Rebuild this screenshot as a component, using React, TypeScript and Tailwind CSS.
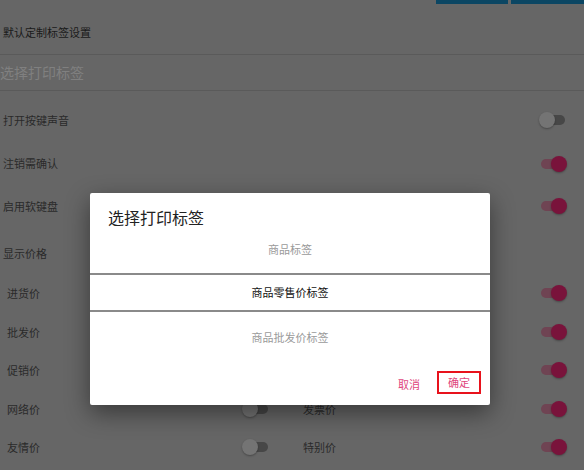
import React from "react";

const font = { fontFamily: '"Noto Sans CJK SC", "Noto Sans", sans-serif' };

function Toggle({ on }: { on: boolean }) {
  return (
    <div className="relative h-[16px] w-[28px]">
      <div
        className={`absolute left-[2px] top-[3px] h-[10px] w-[24px] rounded-full ${
          on ? "bg-[#6f4453]" : "bg-[#474747]"
        }`}
      />
      <div
        className={`absolute top-0 h-[16px] w-[16px] rounded-full shadow-[0_1px_2px_rgba(0,0,0,0.3)] ${
          on ? "right-0 bg-[#79133b]" : "left-0 bg-[#747474]"
        }`}
      />
    </div>
  );
}

const topRows = [
  { label: "打开按键声音", on: false, h: "h-[44px]" },
  { label: "注销需确认", on: true, h: "h-[43px]" },
  { label: "启用软键盘", on: true, h: "h-[42px]" },
];

const priceRows = [
  { left: "进货价", mid: null, right: "", on: true },
  { left: "批发价", mid: null, right: "", on: true },
  { left: "促销价", mid: null, right: "", on: true },
  { left: "网络价", mid: false, right: "发票价", on: true },
  { left: "友情价", mid: false, right: "特别价", on: true },
];

export default function App() {
  return (
    <div className="relative h-[470px] w-[584px] overflow-hidden bg-[#666666]" style={font}>
      {/* top buttons */}
      <div className="flex justify-end gap-[3px]">
        <div className="h-[4px] w-[72px] bg-[#0b4663]" />
        <div className="h-[4px] w-[73px] bg-[#0b4663]" />
      </div>

      <div className="flex h-[50px] items-center pl-[3px] pt-[6px] text-[11px] text-[#1a1a1a]">默认定制标签设置</div>
      <div className="h-px bg-[#5a5a5a]" />
      <div className="flex h-[35px] items-center text-[14px] text-[#808080]">选择打印标签</div>
      <div className="h-px bg-[#5a5a5a]" />

      <div className="pt-[7px]">
        {topRows.map((r) => (
          <div key={r.label} className={`flex ${r.h} items-center justify-between pl-[3px] pr-[17px] text-[11px] text-[#2a2a2a]`}>
            <span>{r.label}</span>
            <Toggle on={r.on} />
          </div>
        ))}
        <div className="flex h-[47px] items-center pl-[3px] pt-[5px] text-[11px] text-[#2a2a2a]">显示价格</div>
        {priceRows.map((r) => (
          <div key={r.left} className="flex h-[38.5px] items-center pr-[17px] text-[11px] text-[#2a2a2a]">
            <span className="w-[242px] pl-[7px]">{r.left}</span>
            <div className="w-[61px]">{r.mid !== null && <Toggle on={r.mid} />}</div>
            <span className="flex-1">{r.right}</span>
            <Toggle on={r.on} />
          </div>
        ))}
      </div>

      {/* dialog */}
      <div className="absolute left-[90px] top-[193px] flex h-[212px] w-[400px] flex-col rounded-[2px] bg-white shadow-[0_8px_24px_rgba(0,0,0,0.45)]">
        <div className="h-[38px] pl-[18px] pt-[14px] text-[16px] leading-[20px] text-[#222222]">选择打印标签</div>
        <div className="flex h-[42px] items-center justify-center pb-[6px] text-[11px] text-[#9a9a9a]">商品标签</div>
        <div className="h-[2px] bg-[#8a8a8a]" />
        <div className="flex h-[35px] items-center justify-center text-[11px] text-[#111111]">商品零售价标签</div>
        <div className="h-[2px] bg-[#8a8a8a]" />
        <div className="flex h-[50px] items-center justify-center text-[11px] text-[#9a9a9a]">商品批发价标签</div>
        <div className="flex flex-1 items-start justify-end pr-[9px] text-[11px] text-[#e0467d]">
          <span className="mr-[17px] mt-[14px] leading-[17px]">取消</span>
          <span className="mt-[9px] flex h-[23px] w-[44px] items-center justify-center border-2 border-[#e8121c]">确定</span>
        </div>
      </div>
    </div>
  );
}
